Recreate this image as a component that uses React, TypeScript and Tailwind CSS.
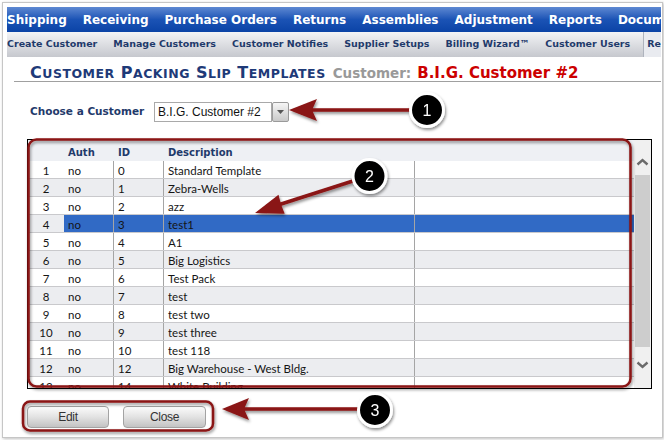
import React from 'react'

const navItems = ['Shipping', 'Receiving', 'Purchase Orders', 'Returns', 'Assemblies', 'Adjustment', 'Reports', 'Documents']
const subItems = ['Create Customer', 'Manage Customers', 'Customer Notifies', 'Supplier Setups', 'Billing Wizard™', 'Customer Users']

const rows = [
  { n: 1, auth: 'no', id: '0', desc: 'Standard Template' },
  { n: 2, auth: 'no', id: '1', desc: 'Zebra-Wells' },
  { n: 3, auth: 'no', id: '2', desc: 'azz' },
  { n: 4, auth: 'no', id: '3', desc: 'test1' },
  { n: 5, auth: 'no', id: '4', desc: 'A1' },
  { n: 6, auth: 'no', id: '5', desc: 'Big Logistics' },
  { n: 7, auth: 'no', id: '6', desc: 'Test Pack' },
  { n: 8, auth: 'no', id: '7', desc: 'test' },
  { n: 9, auth: 'no', id: '8', desc: 'test two' },
  { n: 10, auth: 'no', id: '9', desc: 'test three' },
  { n: 11, auth: 'no', id: '10', desc: 'test 118' },
  { n: 12, auth: 'no', id: '12', desc: 'Big Warehouse - West Bldg.' },
  { n: 13, auth: 'no', id: '14', desc: 'White Building' },
]

const SELECTED = 4

// small caps done by hand so the proportions follow the screenshot
function SmallCaps({ text }: { text: string }) {
  return (
    <>
      {text.split(' ').map((w, i) => (
        <React.Fragment key={i}>
          {i > 0 && ' '}
          <span className="text-[16px]">{w[0]}</span>
          <span className="text-[12.5px] uppercase">{w.slice(1)}</span>
        </React.Fragment>
      ))}
    </>
  )
}

function Chevron({ down }: { down?: boolean }) {
  return (
    <svg width="13" height="8" viewBox="0 0 13 8">
      <polyline
        points={down ? '1.5,1.5 6.5,6 11.5,1.5' : '1.5,6.5 6.5,2 11.5,6.5'}
        fill="none"
        stroke="#6b6b6b"
        strokeWidth="2.4"
      />
    </svg>
  )
}

function Annotations() {
  const red = '#8a1414'
  return (
    <svg className="absolute inset-0 pointer-events-none" width="664" height="440" viewBox="0 0 664 440">
      <defs>
        <filter id="sh" x="-20%" y="-20%" width="140%" height="140%">
          <feDropShadow dx="1" dy="2" stdDeviation="1.4" floodColor="#000" floodOpacity="0.45" />
        </filter>
      </defs>
      <g filter="url(#sh)">
        {/* box around table */}
        <rect x="28.5" y="139.5" width="602" height="247" rx="8" fill="none" stroke={red} strokeWidth="2.5" />
        {/* box around buttons */}
        <rect x="23" y="401.5" width="190" height="29" rx="7" fill="none" stroke={red} strokeWidth="2.5" />

        {/* arrow 1 */}
        <line x1="312" y1="110" x2="412" y2="110" stroke={red} strokeWidth="3.5" />
        <polygon points="289,110 317,99 312,110 317,121" fill={red} />
        {/* arrow 2 */}
        <line x1="278" y1="205" x2="356" y2="180" stroke={red} strokeWidth="3.5" />
        <polygon points="255,213 278.5,194.8 281,204.5 284.7,213.8" fill={red} />
        {/* arrow 3 */}
        <line x1="244" y1="409" x2="360" y2="409" stroke={red} strokeWidth="3.5" />
        <polygon points="222,409 249,398 244,409 249,420" fill={red} />

        {[
          { x: 427, y: 110, t: '1' },
          { x: 369.5, y: 176, t: '2' },
          { x: 375, y: 410, t: '3' },
        ].map((c) => (
          <g key={c.t}>
            <circle cx={c.x} cy={c.y} r="16.5" fill="#050505" stroke="#fff" strokeWidth="3" />
            <text
              x={c.x}
              y={c.y + 5.5}
              textAnchor="middle"
              fill="#fff"
              fontSize="16"
              fontFamily="'Liberation Sans', Arial, sans-serif"
            >
              {c.t}
            </text>
          </g>
        ))}
      </g>
    </svg>
  )
}

export default function App() {
  return (
    <div className="relative w-[664px] h-[440px] bg-white overflow-hidden">
      <div className="ml-[2px] mt-[2px] w-[661px] h-[436px] border border-[#c6c6c6] shadow-[1px_1px_3px_rgba(0,0,0,0.25)] bg-white pl-[4px] pt-[4px] pr-[1px]">
        <div className="h-full overflow-hidden flex flex-col">
          {/* main nav */}
          <div className="h-[25px] shrink-0 flex items-center gap-[16px] whitespace-nowrap bg-linear-to-b from-[#5d88d2] via-[#1b53b5] to-[#0a43a6] font-['DejaVu_Sans',sans-serif] font-bold text-[12px] text-white">
            {navItems.map((n) => (
              <span key={n}>{n}</span>
            ))}
          </div>

          {/* sub nav */}
          <div className="h-[25px] shrink-0 flex items-stretch whitespace-nowrap bg-linear-to-b from-[#f3f4f6] to-[#c6c8ce] font-['DejaVu_Sans',sans-serif] font-bold text-[9.5px] text-[#1f3a6b]">
            <div className="flex items-center gap-[16px]">
              {subItems.map((n) => (
                <span key={n}>{n}</span>
              ))}
            </div>
            <div className="ml-[13px] flex items-center border-l border-[#aeb3bd] bg-[#e9ebf0] pl-[3px] flex-1">
              Reports
            </div>
          </div>

          {/* title */}
          <div className="ml-[7px] h-[25px] shrink-0 flex items-end border-b border-[#a0a0a0] pl-[16px] font-['DejaVu_Sans',sans-serif] font-bold whitespace-nowrap">
            <span className="text-[16px] leading-none">
              <span className="text-[#1e3a78] tracking-[0.5px]">
                <SmallCaps text="Customer Packing Slip Templates" />
              </span>
              <span className="ml-[7px] text-[13.5px] text-[#999999]">Customer:</span>
              <span className="ml-[6px] text-[15px] text-[#cc0000]">B.I.G. Customer #2</span>
            </span>
          </div>

          {/* customer chooser */}
          <div className="mt-[20px] ml-[23px] flex items-center h-[20px]">
            <span className="w-[124px] font-['DejaVu_Sans',sans-serif] font-bold text-[10.5px] text-[#1f3a6b]">
              Choose a Customer
            </span>
            <div className="w-[118px] h-[20px] border border-[#a9a9a9] bg-white pl-[3px] flex items-center font-['Liberation_Sans',Arial,sans-serif] text-[12px] text-[#111]">
              B.I.G. Customer #2
            </div>
            <div className="w-[17px] h-[20px] border border-[#9a9a9a] rounded-[2px] bg-linear-to-b from-[#f6f6f6] to-[#c9c9c9] flex items-center justify-center">
              <svg width="7" height="4" viewBox="0 0 7 4">
                <polygon points="0,0 7,0 3.5,4" fill="#555" />
              </svg>
            </div>
          </div>

          {/* grid */}
          <div className="mt-[17px] ml-[20px] w-[625px] h-[250px] border border-black flex">
            <div className="flex-1 overflow-hidden font-['Lato',sans-serif] text-[11.5px] text-[#151515]">
              <div className="h-[21px] flex items-center pt-[3px] bg-[#eef0f4] font-['DejaVu_Sans',sans-serif] font-bold text-[10px] text-[#1f3a6b]">
                <div className="w-[36px]" />
                <div className="w-[49px] pl-[4px]">Auth</div>
                <div className="w-[50px] pl-[5px]">ID</div>
                <div className="w-[251px] pl-[5px]">Description</div>
              </div>
              {rows.map((r) => {
                const stripe = r.n % 2 === 0 ? 'bg-[#ecedf0]' : 'bg-white'
                const sel = r.n === SELECTED
                const cell = sel ? 'bg-[#316ac5]' : stripe
                return (
                  <div key={r.n} className="h-[18px] flex border-b border-[#c9c9cc]">
                    <div className={`w-[36px] text-center leading-[20px] ${stripe}`}>{r.n}</div>
                    <div className={`w-[49px] pl-[4px] leading-[20px] ${cell}`}>{r.auth}</div>
                    <div className={`w-[50px] pl-[4px] leading-[20px] border-l border-[#a5a5a5] ${cell}`}>{r.id}</div>
                    <div className={`w-[251px] pl-[4px] leading-[20px] border-l border-[#a5a5a5] ${cell}`}>{r.desc}</div>
                    <div className={`flex-1 border-l border-[#a5a5a5] ${cell}`} />
                  </div>
                )
              })}
            </div>
            {/* scrollbar */}
            <div className="w-[17px] bg-[#f0f0f0] flex flex-col items-center pt-[13px]">
              <div className="h-[17px] flex items-center justify-center">
                <Chevron />
              </div>
              <div className="mt-[5px] h-[172px] w-[15px] bg-[#cdcdcd]" />
              <div className="mt-[9px] h-[17px] flex items-center justify-center">
                <Chevron down />
              </div>
            </div>
          </div>

          {/* buttons */}
          <div className="mt-[17px] ml-[20px] flex gap-[14px] font-['Liberation_Sans',Arial,sans-serif] text-[12px] text-[#333] tracking-[-0.3px]">
            <button className="w-[82px] h-[22px] rounded-[4px] border border-[#a3a3a3] bg-linear-to-b from-[#fbfbfb] via-[#e2e2e2] to-[#c3c3c3]">
              Edit
            </button>
            <button className="w-[83px] h-[22px] rounded-[4px] border border-[#a3a3a3] bg-linear-to-b from-[#fbfbfb] via-[#e2e2e2] to-[#c3c3c3]">
              Close
            </button>
          </div>
        </div>
      </div>
      <Annotations />
    </div>
  )
}
